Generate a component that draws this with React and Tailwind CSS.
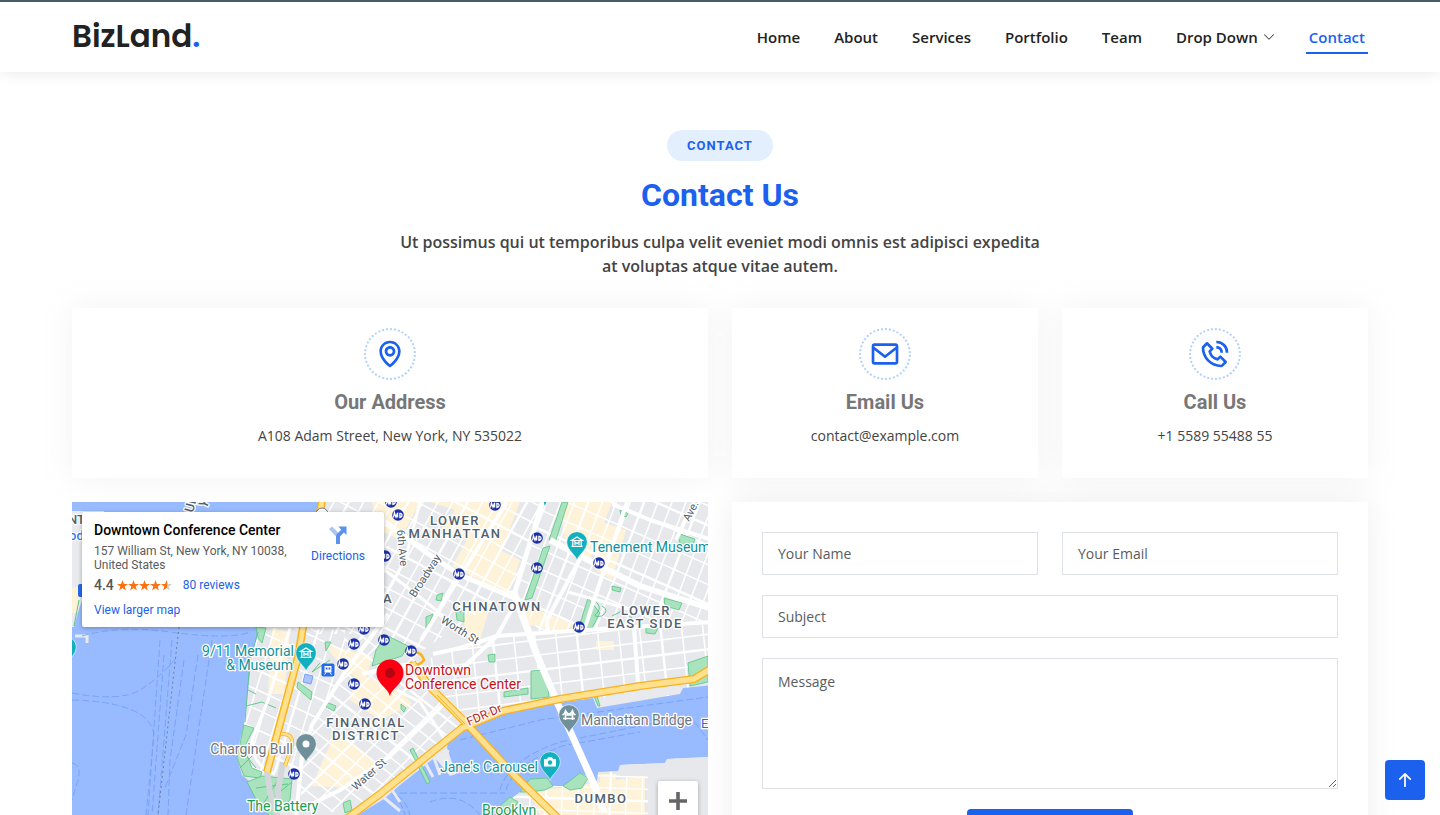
import React from "react";
import { BiMap, BiEnvelope, BiPhoneCall } from "react-icons/bi";
import { BsChevronDown, BsArrowUpShort } from "react-icons/bs";

const NAV = ["Home", "About", "Services", "Portfolio", "Team"];

const MANHATTAN =
  "M320 500L318 520L298 560L262 612L258 634L252 655L244 725L239 744L237 758L242 775L250 782L256 790L258 803L272 818L346 822L384 799L400 785L447 748L449 738L467 728L503 713L557 703L593 698L597 708L680 694L683 688L712 685L712 500Z";
const BROOKLYN =
  "M497 818L503 805L520 792L530 779L547 778L553 786L563 786L572 781L580 773L597 781L598 772L618 771L620 765L665 763L667 759L708 757L712 890L497 890Z";

const ZONES = [
  { id: "soho", clip: "M322 500L545 500L512 597L480 612L423 650L380 634L310 634Z", a: -61, ga: 13, b: 28, gb: 18, cx: 430, cy: 570 },
  { id: "les", clip: "M545 500L712 500L712 624L540 632L512 595Z", a: -69, ga: 13, b: 24, gb: 18, cx: 620, cy: 565 },
  { id: "river", clip: "M433 655L497 636L712 622L712 690L470 724L420 676Z", a: -7, ga: 15, b: 84, gb: 21, cx: 580, cy: 665 },
  { id: "tribeca", clip: "M250 627L345 630L345 672L312 725L298 770L240 775Z", a: -73, ga: 14, b: 25, gb: 18, cx: 300, cy: 690 },
  { id: "fidi", clip: "M345 632L410 640L465 724L350 812L302 812L300 768L312 725L345 672Z", a: -45, ga: 17, b: 38, gb: 13, cx: 370, cy: 725 },
  { id: "dumbo", clip: BROOKLYN, a: 2, ga: 12, b: 92, gb: 16, cx: 610, cy: 800 },
];

const COMMERCIAL = [
  "M372 502L420 502L400 540L380 530Z",
  "M430 502L520 502L500 555L440 530L455 510Z",
  "M470 535L520 560L508 595L452 566Z",
  "M560 502L612 502L590 560L566 550Z",
  "M596 520L626 530L612 580L596 570Z",
  "M461 608L492 600L480 640L466 632Z",
  "M512 600L575 625L560 632L530 625Z",
  "M355 672L400 690L412 704L380 720L350 700Z",
  "M335 735L352 742L378 766L346 788L312 786L322 762Z",
  "M272 628L290 632L284 694L268 694Z",
  "M325 645L372 656L366 680L345 672Z",
  "M530 792L645 776L645 815L540 815Z",
  "M600 774L616 774L616 782L600 782Z",
  "M596 641L614 641L614 650L596 650Z",
];

const PARKS = [
  "M562 502L568 502L556 540L549 540Z",
  "M543 548L550 546L532 598L525 600Z",
  "M386 635L408 646L402 656L372 666L376 650Z",
  "M426 617L433 614L426 632Z",
  "M456 612L464 611L464 622L457 620Z",
  "M437 595L443 593L441 601L436 600Z",
  "M580 624L588 598L600 613L592 628L582 628Z",
  "M664 598L682 603L679 610L665 606Z",
  "M677 533L695 539L692 547L680 543Z",
  "M620 510L628 513L626 517L621 515Z",
  "M646 626L658 628L655 634L646 633Z",
  "M612 586L621 588L620 592L612 590Z",
  "M488 655L495 654L495 662L489 662Z",
  "M531 671L541 670L548 688L549 697L531 699Z",
  "M688 663L708 656L708 682L690 686Z",
  "M504 692L528 688L528 694L504 697Z",
  "M594 696L598 706L600 706L597 696Z",
  "M244 725L254 728L244 748L252 768L262 772L260 778L244 776L237 758Z",
  "M247 782L262 776L292 779L290 800L272 818L258 803Z",
  "M298 682L312 692L311 700L297 688Z",
  "M256 627L266 628L262 643L258 638Z",
  "M325 642L331 642L326 651Z",
  "M326 702L336 706L334 711L326 707Z",
  "M410 750L413 748L430 782L427 784Z",
  "M520 792L530 779L547 778L553 786L545 790L530 792Z",
  "M563 786L580 773L588 778L582 788L570 790Z",
  "M500 806L510 797L518 802L510 815L495 815Z",
  "M343 803L350 800L352 810L345 813Z",
  "M401 704L406 708L404 712L401 709Z",
];

const ROADS = [
  [7, "M513 590L537 655L557 702L593 782L604 812"],
  [6, "M550 540L580 556L640 586L712 609"],
  [5, "M543 500L515 592"],
  [5, "M380 518L427 553L460 575L517 599"],
  [4, "M612 504L650 520L712 540"],
  [4, "M507 502L459 578L421 640"],
  [4, "M388 614L345 672L312 725L302 757L296 815"],
  [4, "M582 555L547 620L548 634"],
  [4, "M627 502L594 600L583 634"],
  [4, "M433 654L460 648L497 636L600 629L712 622"],
  [4, "M634 628L638 682"],
  [4, "M300 810L340 790L389 757L443 705"],
  [3, "M420 502L405 560L368 626"],
  [4, "M694 502L676 540"],
  [3, "M372 560L430 605L445 618L480 645"],
  [3, "M397 690L420 702L444 738"],
  [4, "M517 600L497 636L455 675"],
  [3, "M290 628L268 700L252 740Q252 766 275 774"],
  [3, "M568 592L640 612"],
  [4, "M405 665L388 668L362 674"],
];

const FERRIES = [
  "M160 640L148 815",
  "M164 655L152 815",
  "M172 640L158 815",
  "M184 660L170 760L168 815",
  "M198 655L186 735L164 790",
  "M212 640L200 720L186 815",
  "M72 693Q120 702 140 690Q160 678 178 656",
  "M72 700Q150 702 154 735L146 815",
  "M72 763Q82 765 78 780L72 800",
  "M82 636Q120 625 170 632Q230 640 250 632",
  "M400 793L505 793",
  "M460 740L540 720L708 697",
  "M500 790Q508 760 560 742L690 716L708 740",
  "M506 790Q512 766 562 746L640 732",
  "M384 790Q400 796 405 815",
  "M388 790Q406 798 410 815",
  "M430 802Q460 790 480 815",
];

const METRO = [
  [385, 556], [364, 629], [354, 644], [384, 640], [391, 502], [398, 515], [495, 505], [537, 538],
  [537, 568], [459, 574], [599, 563], [579, 627], [411, 651], [343, 664], [354, 684], [365, 704], [294, 774],
];

function Streets({ zone }) {
  const lines = (angle, gap) => (
    <g transform={`rotate(${angle} ${zone.cx} ${zone.cy})`}>
      {Array.from({ length: 33 }, (_, i) => {
        const y = zone.cy + (i - 16) * gap;
        return <path key={i} d={`M${zone.cx - 260} ${y}h520`} strokeWidth={i % 4 === 0 ? 2.4 : 1.5} />;
      })}
    </g>
  );
  return (
    <g clipPath={`url(#zone-${zone.id})`} stroke="#fff">
      {lines(zone.a, zone.ga)}
      {lines(zone.b, zone.gb)}
    </g>
  );
}

function Pin({ x, y, color, children }) {
  return (
    <g transform={`translate(${x} ${y})`}>
      <path d="M0 18.500C-1 13-10 8.500-10.300 0A10.300 10.300 0 0 1 10.300 0C10 8.500 1 13 0 18.500Z" fill={color} stroke="#fff" strokeWidth="0.600" />
      {children}
    </g>
  );
}

const MuseumGlyph = () => (
  <g fill="none" stroke="#fff" strokeWidth="1.200">
    <path d="M-5.500-1.500L0-5L5.500-1.500ZM-4.200-1V4M4.200-1V4M-5.500 4.400H5.500" />
    <path d="M-2 3V-.2L0 1.600L2-.2V3" />
  </g>
);

function Label({ x, y, color = "#51606b", size = 14, anchor = "start", rotate = 0, spaced = false, children }) {
  return (
    <text
      x={x}
      y={y}
      fill={color}
      fontSize={size}
      textAnchor={anchor}
      transform={rotate ? `rotate(${rotate} ${x} ${y})` : undefined}
      className={spaced ? "font-medium tracking-[1.5px]" : "font-medium"}
      stroke="#fff"
      strokeWidth="2.500"
      strokeLinejoin="round"
      paintOrder="stroke"
    >
      {children}
    </text>
  );
}

function CityMap() {
  return (
    <svg
      viewBox="72 502 636 384"
      preserveAspectRatio="xMinYMin slice"
      className="block h-full w-full font-['Roboto',sans-serif]"
      role="img"
      aria-label="Map of Lower Manhattan"
    >
      <defs>
        <clipPath id="land"><path d={MANHATTAN} /><path d={BROOKLYN} /></clipPath>
        {ZONES.map((z) => (
          <clipPath key={z.id} id={`zone-${z.id}`}><path d={z.clip} /></clipPath>
        ))}
      </defs>
      <rect x="72" y="502" width="636" height="384" fill="#98baff" />
      <path d="M72 511H104V590L82 600L78 612L74 627H72Z" fill="#e8eaed" />
      <path d="M72 588L82 586L78 612L72 613Z" fill="#fef3d8" />
      <path d="M79 600L74 626" fill="none" stroke="#58c486" />
      <path d="M75 636h12v7" fill="none" stroke="#e8eaed" strokeWidth="3" />
      <g fill="none" stroke="#76a0f6" strokeWidth="0.900" strokeDasharray="7 3">
        {FERRIES.map((d) => <path key={d} d={d} />)}
      </g>
      <path d="M179 627L158 815" fill="none" stroke="#6b7f9c" strokeDasharray="2 3" />
      <path d="M421 755L433 777M432 752L440 775M444 750L449 752M382 796L400 811M392 790L400 802" stroke="#e8eaed" strokeWidth="3" />
      <path d="M430 752L446 745L456 774L450 776Z" fill="#e8eaed" />
      <path d={MANHATTAN} fill="#e6e8ec" />
      <path d={BROOKLYN} fill="#e6e8ec" />
      <g clipPath="url(#land)">
        <g fill="#fef3d8">{COMMERCIAL.map((d) => <path key={d} d={d} />)}</g>
        {ZONES.map((z) => <Streets key={z.id} zone={z} />)}
      </g>
      <path d="M598 699L680 683L680 693L598 707Z" fill="#e8eaed" />
      <path d="M620 765L665 763L667 759L708 757V815H648V776H620Z" fill="#e6e8ec" />
      <g fill="#a8e3bd" stroke="#58c486" strokeWidth="0.800">{PARKS.map((d) => <path key={d} d={d} />)}</g>
      <g fill="none" stroke="#58c486" strokeWidth="0.900">
        <path d="M594 600Q602 606 598 612Q590 618 602 616Q610 610 602 606M612 616L622 611L632 618M258 632L250 660L245 722M246 706L262 702L276 708M248 690L256 694" />
        <path d="M240 748L256 768M240 768L252 756M256 788L288 784M266 778L280 812M278 780L262 806M292 782L270 800M286 602L280 626M320 663L312 672L330 660" />
      </g>
      <path d="M305 674l8 2l-2 8l-8-2z" fill="#a9c4fb" stroke="#7aa2ee" />
      <g fill="none" stroke="#fff" strokeLinejoin="round">
        {ROADS.map(([w, d]) => <path key={d} strokeWidth={w} d={d} />)}
      </g>
      <g fill="none" stroke="#d3d6da" strokeWidth="6">
        <path d="M267 771L270 792L279 820" />
        <path d="M283 762L278 790L279 812" />
      </g>
      <g fill="none" strokeLinejoin="round">
        <g stroke="#f9b21d">
          <path d="M345 820L380 794L462 728L503 711L560 699L640 686L694 679L712 668" strokeWidth="8" />
          <path d="M412 663L430 687L465 722L515 776L560 820" strokeWidth="8" />
          <path d="M322 500L303 627L298 657L267 772" strokeWidth="8" />
          <path d="M408 655Q420 648 424 660Q418 668 410 662" strokeWidth="2.500" />
          <path d="M281 734Q294 733 292 746L285 766" strokeWidth="4" />
        </g>
        <g stroke="#ffe18d">
          <path d="M345 820L380 794L462 728L503 711L560 699L640 686L694 679L712 668" strokeWidth="5.500" />
          <path d="M412 663L430 687L465 722L515 776L560 820" strokeWidth="5.500" />
          <path d="M322 500L303 627L298 657L267 772" strokeWidth="5" />
          <path d="M281 734Q294 733 292 746L285 766" strokeWidth="2.500" />
        </g>
        <path d="M437 695L465 724" stroke="#f9b21d" />
      </g>

      <g>
        {METRO.map(([x, y]) => (
          <g key={`${x}-${y}`} transform={`translate(${x} ${y})`}>
            <circle r="5.800" fill="#1a2fa8" />
            <path d="M-4.500 2.500L-3.600-2.200L-2 2.200L-.4-2.200V2.500M1.900-2.200V2.400Q5 1.500 3.600-1L1.700-2" fill="none" stroke="#fff" strokeWidth="1.300" />
          </g>
        ))}
      </g>
      <g transform="translate(328 670)">
        <rect x="-6.500" y="-6.500" width="13" height="13" rx="2" fill="#2568ea" />
        <path d="M-3.500-4H3.500V2.500H-3.500Z" fill="#fff" />
        <path d="M-2.300-2.500H-.5V-.5H-2.300ZM.5-2.500H2.300V-.5H.5Z" fill="#2568ea" />
        <path d="M-2 2.500L-3.500 4.700M2 2.500L3.500 4.700" stroke="#fff" />
      </g>
      <rect x="78" y="584" width="12" height="13" rx="2" fill="#2568ea" />
      <circle cx="322" cy="514" r="6" fill="#fff" stroke="#777" />

      <Label x={68} y={524} size={13}>NT</Label>
      <Label x={69} y={540} size={13} color="#3f78e8">od</Label>
      <Label x={193} y={513} size={13} rotate={-75}>UN</Label>
      <Label x={206} y={509} size={13} rotate={-60}>Y</Label>
      <Label x={383} y={603} size={13}>A</Label>

      <Label x={455} y={525} size={13} anchor="middle" spaced>LOWER</Label>
      <Label x={455} y={538} size={13} anchor="middle" spaced>MANHATTAN</Label>
      <Label x={497} y={611} size={13} anchor="middle" spaced>CHINATOWN</Label>
      <Label x={646} y={615} size={13} anchor="middle" spaced>LOWER</Label>
      <Label x={645} y={628} size={13} anchor="middle" spaced>EAST SIDE</Label>
      <Label x={366} y={727} size={13} anchor="middle" spaced>FINANCIAL</Label>
      <Label x={366} y={740} size={13} anchor="middle" spaced>DISTRICT</Label>
      <Label x={601} y={803} size={13} anchor="middle" spaced>DUMBO</Label>

      <g className="[&>text]:font-normal">
        <Label x={397} y={530} size={11} rotate={85}>6th Ave</Label>
        <Label x={415} y={598} size={11} rotate={-57}>Broadway</Label>
        <Label x={440} y={622} size={11} rotate={32}>Worth St</Label>
        <Label x={689} y={522} size={11} rotate={-62}>Ave.</Label>
        <Label x={356} y={791} size={11} rotate={-42}>Water St</Label>
        <Label x={469} y={726} size={12} rotate={-24} color="#b3261e">FDR Dr</Label>
        <Label x={701} y={728} size={13} color="#3f62c8">E</Label>
      </g>

      <Pin x={577} y={542} color="#12b0bf"><MuseumGlyph /></Pin>
      <Pin x={306} y={653} color="#12b0bf"><MuseumGlyph /></Pin>
      <Pin x={66} y={647} color="#12b0bf" />
      <Pin x={306} y={744} color="#6f909b"><circle r="3.500" fill="#fff" /></Pin>
      <Pin x={569} y={715} color="#6f909b">
        <path d="M-6 3.500H6M-3.500 5V-5M3.500 5V-5M-6.500 0Q-4-1-3.500-4Q0 2 3.500-4Q4-1 6.500 0M-3 0H3" fill="none" stroke="#fff" strokeWidth="1.600" />
      </Pin>
      <Pin x={550} y={762} color="#12b0bf">
        <path d="M-6-3H-3L-2-4.800H2L3-3H6V4.500H-6Z" fill="#fff" />
        <circle cy=".5" r="2.200" fill="#12b0bf" />
      </Pin>
      <path d="M543 500h4l-2 6z" fill="#12b0bf" />
      <g transform="translate(390 673)">
        <path d="M0 23.500C-1.500 15-13.500 11-13.500 0A13.500 13.500 0 0 1 13.500 0C13.500 11 1.500 15 0 23.500Z" fill="#fb0012" />
        <circle r="5" fill="#b00710" />
      </g>

      <g className="[&>text]:font-normal">
        <Label x={590} y={552} color="#129099">Tenement Museum</Label>
        <Label x={294} y={656} color="#129099" anchor="end">9/11 Memorial</Label>
        <Label x={293} y={670} color="#129099" anchor="end">& Museum</Label>
        <Label x={293} y={754} color="#71767c" anchor="end">Charging Bull</Label>
        <Label x={247} y={811} color="#1c9c55">The Battery</Label>
        <Label x={538} y={772} color="#129099" anchor="end">Jane&apos;s Carousel</Label>
        <Label x={482} y={815} color="#1c9c55">Brooklyn</Label>
        <Label x={581} y={725} color="#6a7884">Manhattan Bridge</Label>
        <Label x={405} y={675} color="#c5131c">Downtown</Label>
        <Label x={405} y={689} color="#c5131c">Conference Center</Label>
      </g>
    </svg>
  );
}

const STAR = "M5.500 0L6.900 3.900L11 4L7.700 6.500L8.900 10.500L5.500 8.100L2.100 10.500L3.300 6.500L0 4L4.100 3.900Z";

function Stars() {
  return (
    <svg viewBox="0 0 55 11" className="h-[11px] w-[55px]" role="img" aria-label="4.4 out of 5 stars">
      <defs>
        <linearGradient id="half">
          <stop offset="55%" stopColor="#ff7011" />
          <stop offset="55%" stopColor="#cfcfcf" />
        </linearGradient>
      </defs>
      {[0, 1, 2, 3, 4].map((i) => (
        <path key={i} transform={`translate(${i * 11} 0)`} d={STAR} fill={i === 4 ? "url(#half)" : "#ff7011"} />
      ))}
    </svg>
  );
}

function PlaceCard() {
  return (
    <div className="absolute left-[10px] top-[10px] flex h-[115px] w-[302px] justify-between rounded-xs bg-white pb-2 pl-3 pr-[19px] pt-[10px] font-['Roboto',sans-serif] text-xs shadow-[0_1px_4px_rgba(0,0,0,0.3)]">
      <div>
        <div className="text-sm font-medium leading-4 text-black">Downtown Conference Center</div>
        <div className="mt-[6px] w-[200px] leading-[14px] text-[#5b5b5b]">157 William St, New York, NY 10038, United States</div>
        <div className="mt-[5px] flex items-center leading-4">
          <span className="mr-[3px] text-sm font-medium leading-4 text-[#555]">4.4</span>
          <Stars />
          <a href="#reviews" className="ml-[11px] text-[#1a62e8]">80 reviews</a>
        </div>
        <a href="#map" className="mt-[9px] block leading-4 text-[#1a62e8]">View larger map</a>
      </div>
      <a href="#directions" className="flex flex-col items-center text-[#1a62e8]">
        <svg viewBox="0 0 20 20" className="mt-[3px] h-5 w-5" aria-hidden="true">
          <path d="M1 4L4 1.500L11 8.500L8.500 12Z" fill="#a9c4f7" />
          <path d="M8 19V11.500Q8 10 9.200 8.800L13.200 4.800L10.500 1.500H18.500V10L16 7.600L12 11.600V19Z" fill="#5a92ee" />
        </svg>
        <span className="mt-[3px] leading-4">Directions</span>
      </a>
    </div>
  );
}

function InfoCard({ icon: Icon, title, text, className }) {
  return (
    <div className={`flex h-[170px] flex-col items-center bg-white pt-5 shadow-[0_0_30px_rgba(214,215,216,0.3)] ${className}`}>
      <div className="flex h-[52px] w-[52px] items-center justify-center rounded-full border-2 border-dotted border-[#b3d1fa]">
        <Icon className="h-8 w-8 text-[#1b61ee]" />
      </div>
      <h3 className="mt-[10px] font-['Roboto',sans-serif] text-xl font-bold leading-6 text-[#777]">{title}</h3>
      <p className="mt-[11px] text-sm leading-[21px]">{text}</p>
    </div>
  );
}

const FIELD =
  "block w-full border border-[#dee2e6] bg-white px-[15px] text-sm text-[#444] placeholder:text-[#595c5f] outline-none focus:border-[#1b61ee]";

export default function App() {
  return (
    <div className="h-screen overflow-hidden bg-white font-['Open_Sans',sans-serif] text-[#444]">
      <header className="relative z-10 border-t-2 border-[#4a5c66] bg-white shadow-[0_0_15px_rgba(0,0,0,0.1)]">
        <div className="mx-auto flex h-[70px] max-w-[1320px] items-center justify-between px-3">
          <a href="#home" className="pb-[2px] font-['Poppins','Inter',sans-serif] text-[31px] font-semibold leading-9 text-[#222]">
            BizLand<span className="text-[#1b61ee]">.</span>
          </a>
          <nav className="flex items-center gap-7 text-[15px] font-semibold text-[#222]">
            {NAV.map((n) => (
              <a key={n} href={`#${n.toLowerCase()}`} className="px-[3px]">{n}</a>
            ))}
            <a href="#drop-down" className="flex items-center gap-[5px] px-[3px]">
              Drop Down
              <BsChevronDown className="h-3 w-3" />
            </a>
            <a href="#contact" className="mt-[2px] border-b-2 border-[#1b61ee] px-[3px] py-1 leading-[22px] text-[#1b61ee]">Contact</a>
          </nav>
        </div>
      </header>

      <main className="mx-auto max-w-[1320px] px-3 pt-[58px]">
        <section className="flex flex-col items-center text-center">
          <h2 className="rounded-full bg-[#e3effd] px-5 py-2 font-['Roboto',sans-serif] text-[13px] font-bold uppercase leading-[15px] tracking-[1px] text-[#1b61ee]">
            Contact
          </h2>
          <h3 className="mt-[15px] font-['Roboto',sans-serif] text-[32px] font-bold leading-[38px] text-[#1b61ee]">Contact Us</h3>
          <p className="mt-4 w-1/2 text-base font-semibold leading-6">
            Ut possimus qui ut temporibus culpa velit eveniet modi omnis est adipisci expedita at voluptas atque vitae autem.
          </p>
        </section>

        <section className="mt-[30px] grid grid-cols-4 gap-6">
          <InfoCard icon={BiMap} title="Our Address" text="A108 Adam Street, New York, NY 535022" className="col-span-2" />
          <InfoCard icon={BiEnvelope} title="Email Us" text="contact@example.com" className="" />
          <InfoCard icon={BiPhoneCall} title="Call Us" text="+1 5589 55488 55" className="" />
        </section>

        <section className="mt-6 grid grid-cols-2 gap-6">
          <div className="relative h-96 overflow-hidden">
            <CityMap />
            <PlaceCard />
            <button
              type="button"
              aria-label="Zoom in"
              className="absolute right-[10px] top-[279px] flex h-10 w-10 items-center justify-center rounded-xs bg-white shadow-[0_1px_4px_rgba(0,0,0,0.3)]"
            >
              <svg viewBox="0 0 18 18" className="h-[18px] w-[18px]" aria-hidden="true">
                <path d="M7.200 0H10.800V7.200H18V10.800H10.800V18H7.200V10.800H0V7.200H7.200Z" fill="#666" />
              </svg>
            </button>
          </div>

          <form className="flex flex-col gap-5 bg-white p-[30px] shadow-[0_0_30px_rgba(214,215,216,0.4)]">
            <div className="grid grid-cols-2 gap-6">
              <input type="text" aria-label="Your Name" placeholder="Your Name" className={`${FIELD} h-[43px]`} />
              <input type="email" aria-label="Your Email" placeholder="Your Email" className={`${FIELD} h-[43px]`} />
            </div>
            <input type="text" aria-label="Subject" placeholder="Subject" className={`${FIELD} h-[43px]`} />
            <textarea aria-label="Message" placeholder="Message" className={`${FIELD} h-[131px] resize py-3 leading-[21px]`} />
            <button type="button" className="self-center rounded-sm bg-[#1b61ee] px-[30px] py-[10px] text-base text-white">
              Send Message
            </button>
          </form>
        </section>
      </main>

      <a
        href="#top"
        aria-label="Back to top"
        className="fixed bottom-[15px] right-[15px] z-20 flex h-10 w-10 items-center justify-center rounded-sm bg-[#1b61ee] text-white"
      >
        <BsArrowUpShort className="h-7 w-7" />
      </a>
    </div>
  );
}
